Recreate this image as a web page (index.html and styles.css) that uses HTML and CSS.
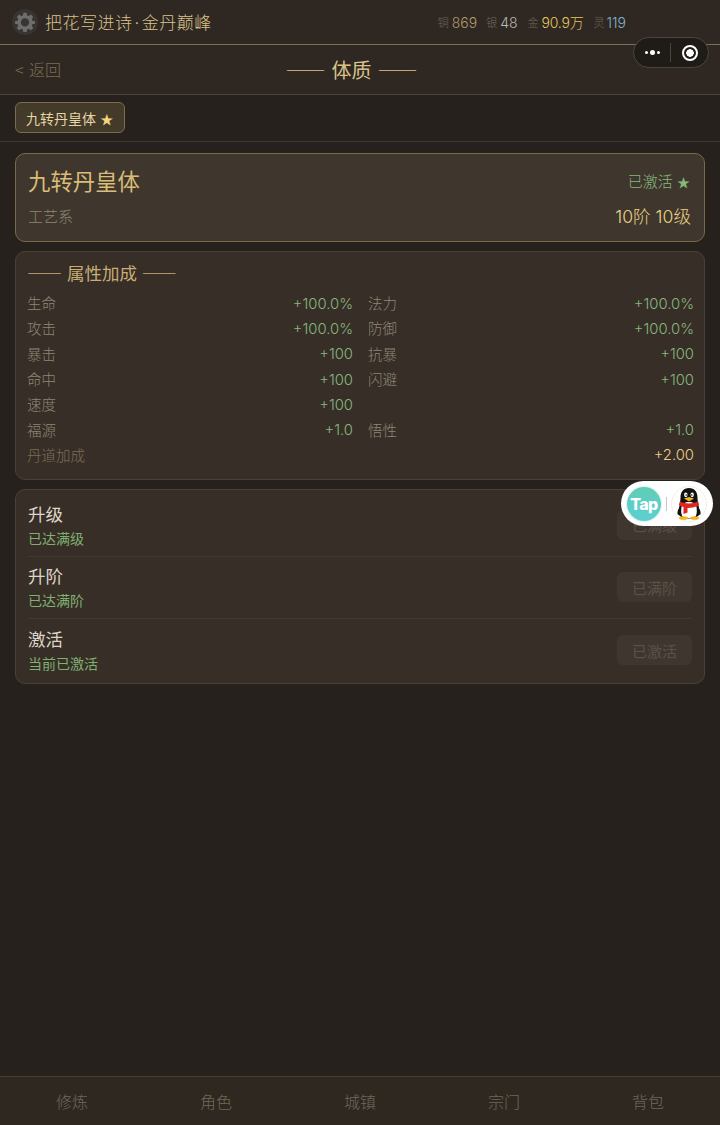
FILE: index.html
```html
<!DOCTYPE html>
<html lang="zh-CN">
<head>
  <meta charset="UTF-8" />
  <meta name="viewport" content="width=device-width, initial-scale=1" />
  <title>体质</title>
  <link rel="stylesheet" href="styles.css">
</head>
<body>

<div class="page">
  <header class="topbar">
    <div class="player">
      <span class="gear">
        <svg viewBox="0 0 24 24" width="20" height="20">
          <path fill="#6d6d6f" fill-rule="evenodd" d="M10 1h4l.6 3.1 1.900.8L19.100 3.100 21.900 5.900 20.100 8.500l.8 1.900L24 11v3l-3.100.6-.8 1.900 1.800 2.600-2.800 2.800-2.600-1.800-1.900.8L14 24h-4l-.6-3.100-1.900-.8-2.600 1.800-2.800-2.800 1.800-2.600-.8-1.900L0 14v-3l3.100-.6.8-1.900L2.100 5.900 4.900 3.100 7.500 4.900l1.900-.8zM12 7.500a5 5 0 1 0 0 10 5 5 0 0 0 0-10z"/>
        </svg>
      </span>
      <span class="player-name">把花写进诗<span class="sep">·</span>金丹巅峰</span>
    </div>
    <div class="money">
      <span class="coin coin-first"><small>铜</small><b class="copper">869</b></span>
      <span class="coin"><small>银</small><b class="silver">48</b></span>
      <span class="coin"><small>金</small><b class="gold">90.9万</b></span>
      <span class="coin coin-last"><small>灵</small><b class="spirit">119</b></span>
    </div>
  </header>

  <div class="titlebar">
    <a class="back">&lt; 返回</a>
    <h1>—— 体质 ——</h1>
  </div>

  <div class="tabs">
    <button class="tab">九转丹皇体 <span class="star">★</span></button>
  </div>

  <main class="content">
    <section class="hero">
      <div class="hero-row">
        <h2>九转丹皇体</h2>
        <span class="active-tag">已激活 <span class="star-sm">★</span></span>
      </div>
      <div class="hero-row hero-row-low">
        <span class="school">工艺系</span>
        <span class="rank">10阶 10级</span>
      </div>
    </section>

    <section class="panel attrs">
      <h3>—— 属性加成 ——</h3>
      <div class="attr-grid">
        <div class="attr"><span>生命</span><b>+100.0%</b></div>
        <div class="attr"><span>法力</span><b>+100.0%</b></div>
        <div class="attr"><span>攻击</span><b>+100.0%</b></div>
        <div class="attr"><span>防御</span><b>+100.0%</b></div>
        <div class="attr"><span>暴击</span><b>+100</b></div>
        <div class="attr"><span>抗暴</span><b>+100</b></div>
        <div class="attr"><span>命中</span><b>+100</b></div>
        <div class="attr"><span>闪避</span><b>+100</b></div>
        <div class="attr"><span>速度</span><b>+100</b></div>
        <div class="attr"></div>
        <div class="attr"><span>福源</span><b>+1.0</b></div>
        <div class="attr"><span>悟性</span><b>+1.0</b></div>
        <div class="attr attr-wide"><span>丹道加成</span><b>+2.00</b></div>
      </div>
    </section>

    <section class="panel actions">
      <div class="action">
        <div><h4>升级</h4><p>已达满级</p></div>
        <button class="btn-off">已满级</button>
      </div>
      <div class="action">
        <div><h4>升阶</h4><p>已达满阶</p></div>
        <button class="btn-off">已满阶</button>
      </div>
      <div class="action">
        <div><h4>激活</h4><p>当前已激活</p></div>
        <button class="btn-off">已激活</button>
      </div>
    </section>
  </main>

  <nav class="bottomnav">
    <a>修炼</a>
    <a>角色</a>
    <a>城镇</a>
    <a>宗门</a>
    <a>背包</a>
  </nav>

  <!-- 小程序胶囊 -->
  <div class="capsule">
    <span class="dots"><i></i><i class="big"></i><i></i></span>
    <span class="capsule-line"></span>
    <span class="target"></span>
  </div>

  <!-- 悬浮入口 -->
  <div class="float">
    <span class="tap">Tap</span>
    <span class="float-line"></span>
    <span class="qq">
      <svg viewBox="0 0 26 32" width="26" height="32">
        <path d="M5 17c-2 3-4 6-3.500 9 .3 1.500 2 .5 3-1z" fill="#111"/>
        <path d="M21 17c2 3 4 6 3.500 9-.3 1.500-2 .5-3-1z" fill="#111"/>
        <path d="M13 0c5.500 0 8.500 4 8.500 9.500 0 3 .5 5 1 8L24 26c-2 3-6 4.500-11 4.500S4 29 2 26l1.500-8.500c.5-3 1-5 1-8C4.500 4 7.500 0 13 0z" fill="#111"/>
        <path d="M13 14c4 0 7 1.500 7.500 5 .5 4 .5 7-1 9.500-1.500 1-4 1.500-6.500 1.500s-5-.5-6.500-1.500c-1.500-2.500-1.500-5.500-1-9.500.5-3.500 3.500-5 7.500-5z" fill="#fff"/>
        <ellipse cx="9.800" cy="6.800" rx="1.700" ry="2.400" fill="#fff"/>
        <ellipse cx="16.200" cy="6.800" rx="1.700" ry="2.400" fill="#fff"/>
        <circle cx="10.200" cy="7" r=".8" fill="#111"/>
        <circle cx="15.800" cy="7" r=".8" fill="#111"/>
        <path d="M8 10.500 13 9l5 1.500-5 3z" fill="#f3b41e"/>
        <path d="M3.800 13.500c6 2.500 12.400 2.500 18.400 0l.8 3.500c-3 2-6.500 3-11.500 3v4.500l-4 1.500V19c-1.500-.5-3-1-4.500-2z" fill="#e0261c"/>
        <ellipse cx="7.500" cy="30" rx="4.500" ry="1.800" fill="#f3b41e"/>
        <ellipse cx="18.500" cy="30" rx="4.500" ry="1.800" fill="#f3b41e"/>
      </svg>
    </span>
  </div>
</div>

</body>
</html>
```

FILE: styles.css
```css
* {
  box-sizing: border-box;
}
body {
  margin: 0;
  background-color: #27211d;
  font-family: "Inter", "Noto Sans CJK SC", sans-serif;
  font-weight: 300;
}
.page {
  position: relative;
  display: flex;
  flex-direction: column;
  height: 1125px;
  overflow: hidden;
}
h1, h2, h3, h4, p {
  margin: 0;
  font-weight: 400;
}

/* 顶部 */
.topbar {
  display: flex;
  align-items: center;
  height: 45px;
  padding: 0 94px 0 12px;
  background-color: #2f2822;
  border-bottom: 1px solid #7d6f58;
}
.player {
  display: flex;
  align-items: center;
  gap: 7px;
  flex: 1;
}
.gear {
  display: flex;
  align-items: center;
  justify-content: center;
  width: 26px;
  height: 26px;
  border-radius: 50%;
  background-color: #383430;
}
.player-name {
  font-size: 17px;
  letter-spacing: .5px;
  line-height: 22px;
  color: #d9c28a;
  font-family: "Noto Sans CJK SC", sans-serif;
}
.sep {
  margin: 0 2px;
  font-family: "Inter", sans-serif;
  font-weight: 300;
}
.money {
  display: flex;
  gap: 10px;
}
.coin {
  display: flex;
  align-items: center;
  gap: 3px;
}
.coin-first {
  margin-right: -1px;
}
.coin-last {
  gap: 2px;
}
.coin small {
  font-size: 11px;
  color: #6f675b;
  font-family: "Noto Sans CJK SC", sans-serif;
}
.coin b {
  font-size: 14px;
  font-weight: 300;
  font-family: "Inter", "Noto Sans CJK SC", sans-serif;
}
.copper { color: #b09a6e; }
.silver { color: #b9b9b5; }
.gold { color: #e6c65c; letter-spacing: -.2px; }
.spirit { color: #7fb6cf; }

/* 标题 */
.titlebar {
  position: relative;
  display: flex;
  align-items: center;
  justify-content: center;
  height: 50px;
  padding-right: 17px;
  background-color: #2f2822;
  border-bottom: 1px solid #4a4338;
}
.back {
  position: absolute;
  left: 15px;
  top: 14px;
  font-size: 16px;
  word-spacing: 2px;
  line-height: 20px;
  color: #7c6e52;
  font-family: "Noto Sans CJK SC", sans-serif;
}
.titlebar h1 {
  font-size: 20px;
  word-spacing: 1.5px;
  color: #d9c28a;
  font-family: "Noto Sans CJK SC", sans-serif;
}

.tabs {
  height: 47px;
  padding: 7px 15px 0;
  border-bottom: 1px solid #3d362d;
}
.tab {
  height: 31px;
  padding: 0 11px 0 10px;
  font: 400 14px "Noto Sans CJK SC", sans-serif;
  color: #e6d5a6;
  background-color: #443a2a;
  border: 1px solid #7a6c50;
  border-radius: 6px;
}
.star {
  margin-left: 1px;
  font-size: 13px;
  color: #f3d77e;
}

/* 内容 */
.content {
  display: flex;
  flex-direction: column;
  gap: 9px;
  padding: 11px 15px 0;
  flex: 1;
}
.hero {
  height: 89px;
  padding: 11px 13px 0 12px;
  background-color: #3f372d;
  border: 1px solid #7a6a48;
  border-radius: 10px;
}
.hero-row {
  display: flex;
  align-items: center;
  justify-content: space-between;
}
.hero-row-low {
  margin-top: 6px;
}
.hero-row h2 {
  font-size: 22.400px;
  line-height: 30px;
  color: #d9bd78;
  font-family: "Noto Sans CJK SC", sans-serif;
}
.active-tag {
  margin-right: 1px;
  font-size: 15px;
  word-spacing: 1px;
  color: #86b87c;
  font-family: "Noto Sans CJK SC", sans-serif;
}
.star-sm {
  font-size: 13px;
}
.school {
  margin-bottom: 2px;
  font-size: 15px;
  color: #8e8674;
  font-family: "Noto Sans CJK SC", sans-serif;
}
.rank {
  padding-top: 2px;
  font-size: 17.600px;
  line-height: 28px;
  color: #eccf85;
}
.panel {
  background-color: #372e28;
  border: 1px solid #4a4136;
  border-radius: 10px;
}
.attrs {
  height: 229px;
  padding: 8px 10px 0 11px;
}
.attrs h3 {
  height: 26px;
  line-height: 26px;
  font-size: 17.500px;
  word-spacing: 1px;
  color: #c8ad74;
  font-family: "Noto Sans CJK SC", sans-serif;
}
.attr-grid {
  display: grid;
  grid-template-columns: 1fr 1fr;
  column-gap: 15px;
  margin-top: 4px;
}
.attr {
  display: flex;
  justify-content: space-between;
  height: 25.300px;
  align-items: center;
}
.attr span {
  font-size: 14.500px;
  color: #8e8674;
  font-family: "Noto Sans CJK SC", sans-serif;
}
.attr b {
  padding-top: 2px;
  font-size: 14.800px;
  font-weight: 300;
  color: #86b87c;
}
.attr-wide {
  grid-column: 1 / 3;
}
.attr-wide span {
  color: #7c6e52;
}
.attr-wide b {
  color: #eccf85;
}
.actions {
  height: 195px;
  padding: 4px 12px 0 12px;
}
.action {
  display: flex;
  align-items: center;
  justify-content: space-between;
  height: 62.500px;
  border-bottom: 1px solid #423a31;
}
.action:last-child {
  border-bottom: none;
}
.action h4 {
  font-size: 17.500px;
  line-height: 25px;
  color: #ddd6c6;
  font-family: "Noto Sans CJK SC", sans-serif;
}
.action p {
  margin-top: 2px;
  font-size: 14px;
  line-height: 21px;
  color: #7fb06f;
  font-family: "Noto Sans CJK SC", sans-serif;
}
.btn-off {
  width: 75px;
  height: 30px;
  font: 400 15px "Noto Sans CJK SC", sans-serif;
  color: #5a5247;
  background-color: #3f372f;
  border: none;
  border-radius: 6px;
}

/* 底部导航 */
.bottomnav {
  display: grid;
  grid-template-columns: repeat(5, 1fr);
  height: 49px;
  background-color: #2f2820;
  border-top: 1px solid #463d2f;
}
.bottomnav a {
  display: flex;
  align-items: center;
  justify-content: center;
  font-size: 16px;
  color: #6f675b;
  font-family: "Noto Sans CJK SC", sans-serif;
}

/* 胶囊 */
.capsule {
  position: absolute;
  left: 633px;
  top: 37px;
  display: flex;
  align-items: center;
  width: 76px;
  height: 31px;
  background-color: #1f1b17;
  border: 1px solid #4a4540;
  border-radius: 16px;
}
.dots {
  display: flex;
  align-items: center;
  justify-content: center;
  gap: 2px;
  width: 36px;
}
.dots i {
  width: 3px;
  height: 3px;
  border-radius: 50%;
  background-color: #fff;
}
.dots i.big {
  width: 5px;
  height: 5px;
}
.capsule-line {
  width: 1px;
  height: 19px;
  background-color: #4a4540;
}
.target {
  width: 16px;
  height: 16px;
  margin-left: 11px;
  border: 2px solid #fff;
  border-radius: 50%;
  background: radial-gradient(circle, #fff 0 3.500px, transparent 4px);
}

/* 悬浮 */
.float {
  position: absolute;
  left: 621px;
  top: 481px;
  display: flex;
  align-items: center;
  width: 92px;
  height: 45px;
  padding-left: 6px;
  background-color: #fff;
  border-radius: 23px;
}
.tap {
  display: flex;
  align-items: center;
  justify-content: center;
  width: 34px;
  height: 34px;
  font: 800 16px "Inter", sans-serif;
  letter-spacing: -.6px;
  color: #fff;
  background: linear-gradient(180deg, #5fcdb6, #5ccfd2);
  border-radius: 50%;
  box-shadow: 0 0 0 1px #dff3ef;
}
.float-line {
  width: 1px;
  height: 14px;
  margin-left: 5px;
  background-color: #c8c8c8;
}
.qq {
  display: flex;
  align-items: center;
  justify-content: center;
  width: 36px;
  height: 36px;
  margin-left: 4px;
  border: 1px solid #f4efe6;
  border-radius: 50%;
}
```
